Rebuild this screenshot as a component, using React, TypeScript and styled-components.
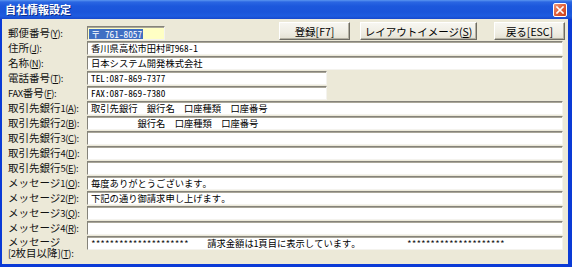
import React from 'react';
import styled, { createGlobalStyle } from 'styled-components';

const Global = createGlobalStyle`
  html, body { margin: 0; padding: 0; background: #ECE9D8; }
  body {
    width: 572px; height: 267px; overflow: hidden;
    font-family: "Noto Sans CJK JP", "Noto Sans", sans-serif;
    -webkit-font-smoothing: antialiased;
  }
`;

const Window = styled.div`
  width: 572px;
  height: 267px;
  display: flex;
  flex-direction: column;
  background: #0A3AD6;
`;

const TitleBar = styled.div`
  height: 19px;
  flex: none;
  display: flex;
  align-items: center;
  padding: 0 5px 0 5px;
  background: linear-gradient(to bottom, #5A96F0 0px, #2A66E2 2px, #1C58DC 6px, #1A55DA 12px, #1E5CE0 16px, #1648CC 19px);
`;

const Title = styled.span`
  color: #fff;
  font-size: 11px;
  font-weight: 700;
  text-shadow: 1px 1px 0 #0B2C8A;
  line-height: 19px;
`;

const CloseButton = styled.div`
  margin-left: auto;
  width: 14px;
  height: 14px;
  box-sizing: border-box;
  border: 1px solid #fff;
  border-radius: 2px;
  background: linear-gradient(135deg, #F09A7C 0%, #E2643D 45%, #C9401B 100%);
  display: flex;
  align-items: center;
  justify-content: center;
`;

const Body = styled.div`
  flex: 1;
  margin: 0 4px 3px 2px;
  background: #ECE9D8;
  padding: 3px 5px 0 6px;
  display: flex;
  flex-direction: column;
`;

const Row = styled.div<{ $h?: number }>`
  display: grid;
  grid-template-columns: 79px 1fr;
  height: ${p => p.$h ?? 15}px;
  align-items: start;
`;

const Label = styled.div<{ $top?: number }>`
  font-size: 10.5px;
  line-height: 14px;
  height: 14px;
  color: #111;
  white-space: nowrap;
  margin-top: ${p => p.$top ?? 0}px;
`;

const TwoLineLabel = styled.div`
  font-size: 10.5px;
  line-height: 11px;
  color: #111;
  white-space: nowrap;
`;

const Narrow = styled.span`
  font-size: 9.4px;
  letter-spacing: -0.4px;
`;

const FieldCell = styled.div`
  display: flex;
  align-items: flex-start;
`;

const Field = styled.div<{ $w?: number; $bg?: string; $top?: number }>`
  box-sizing: border-box;
  height: 14px;
  width: ${p => (p.$w ? `${p.$w}px` : '100%')};
  margin-top: ${p => p.$top ?? 0}px;
  background: ${p => p.$bg ?? '#FFFFFF'};
  border-top: 1px solid #85837A;
  border-left: 1px solid #85837A;
  border-right: 1px solid #F4F3EE;
  border-bottom: 1px solid #F4F3EE;
  box-shadow: inset 0 1px 0 #A9A698;
  padding: 1px 0 0 3px;
  font-family: "Noto Sans Mono CJK JP", "Noto Sans CJK JP", monospace;
  font-size: 9.3px;
  line-height: 11px;
  color: #000;
  white-space: pre;
  overflow: hidden;
`;

const Selected = styled.span`
  display: inline-block;
  background: #3F6FC3;
  color: #fff;
  margin-left: -2px;
  padding: 0 1px 0 2px;
  line-height: 10px;
  height: 10px;
  margin-top: 1px;
`;

const ButtonGroup = styled.div`
  margin-left: auto;
  margin-right: -2px;
  display: flex;
`;

const Button = styled.div<{ $w: number; $gap?: number }>`
  box-sizing: border-box;
  width: ${p => p.$w}px;
  height: 18px;
  margin-left: ${p => p.$gap ?? 0}px;
  border: 1px solid;
  border-color: #FFFFFF #6E6C63 #6E6C63 #FFFFFF;
  box-shadow: inset -1px -1px 0 #B3B0A2;
  background: linear-gradient(to bottom, #F7F6F1 0%, #EFEDE3 60%, #E4E1D3 100%);
  display: flex;
  align-items: center;
  justify-content: center;
  font-size: 10.5px;
  color: #000;
  white-space: nowrap;
`;

const Key: React.FC<{ k: string; n?: string }> = ({ k, n }) => (
  <Narrow>
    {n}(<u>{k}</u>):
  </Narrow>
);

type Line = { label: React.ReactNode; text?: string; w?: number };

const lines: Line[] = [
  { label: <>住所<Key k="J" /></>, text: '香川県高松市田村町968-1' },
  { label: <>名称<Key k="N" /></>, text: '日本システム開発株式会社' },
  { label: <>電話番号<Key k="T" /></>, text: 'TEL:087-869-7377', w: 240 },
  { label: <><Narrow>FAX</Narrow>番号<Key k="F" /></>, text: 'FAX:087-869-7380', w: 240 },
  { label: <>取引先銀行<Key n="1" k="A" /></>, text: '取引先銀行  銀行名  口座種類  口座番号' },
  { label: <>取引先銀行<Key n="2" k="B" /></>, text: '          銀行名  口座種類  口座番号' },
  { label: <>取引先銀行<Key n="3" k="C" /></> },
  { label: <>取引先銀行<Key n="4" k="D" /></> },
  { label: <>取引先銀行<Key n="5" k="E" /></> },
  { label: <>メッセージ<Key n="1" k="O" /></>, text: '毎度ありがとうございます。' },
  { label: <>メッセージ<Key n="2" k="P" /></>, text: '下記の通り御請求申し上げます。' },
  { label: <>メッセージ<Key n="3" k="Q" /></> },
  { label: <>メッセージ<Key n="4" k="R" /></> },
];

const stars = '*********************';

export default function App() {
  return (
    <>
      <Global />
      <Window>
        <TitleBar>
          <Title>自社情報設定</Title>
          <CloseButton>
            <svg width="8" height="8" viewBox="0 0 8 8">
              <path d="M1 1 L7 7 M7 1 L1 7" stroke="#fff" strokeWidth="1.6" strokeLinecap="square" />
            </svg>
          </CloseButton>
        </TitleBar>
        <Body>
          <Row $h={19}>
            <Label $top={4}>郵便番号<Key k="Y" /></Label>
            <FieldCell>
              <Field $w={78} $bg="#FFFFC4" $top={4}>
                <Selected>〒 761-8057</Selected>
              </Field>
              <ButtonGroup>
                <Button $w={71}>登録[F7]</Button>
                <Button $w={117} $gap={10}>レイアウトイメージ(<u>S</u>)</Button>
                <Button $w={71} $gap={17}>戻る[ESC]</Button>
              </ButtonGroup>
            </FieldCell>
          </Row>
          {lines.map((l, i) => (
            <Row key={i}>
              <Label>{l.label}</Label>
              <FieldCell>
                <Field $w={l.w}>{l.text ?? ''}</Field>
              </FieldCell>
            </Row>
          ))}
          <Row $h={24}>
            <TwoLineLabel>
              メッセージ
              <br />
              <Narrow>[2</Narrow>枚目以降<Narrow>]</Narrow><Key k="T" />
            </TwoLineLabel>
            <FieldCell>
              <Field>{`${stars}    請求金額は1頁目に表示しています。          ${stars}`}</Field>
            </FieldCell>
          </Row>
        </Body>
      </Window>
    </>
  );
}
